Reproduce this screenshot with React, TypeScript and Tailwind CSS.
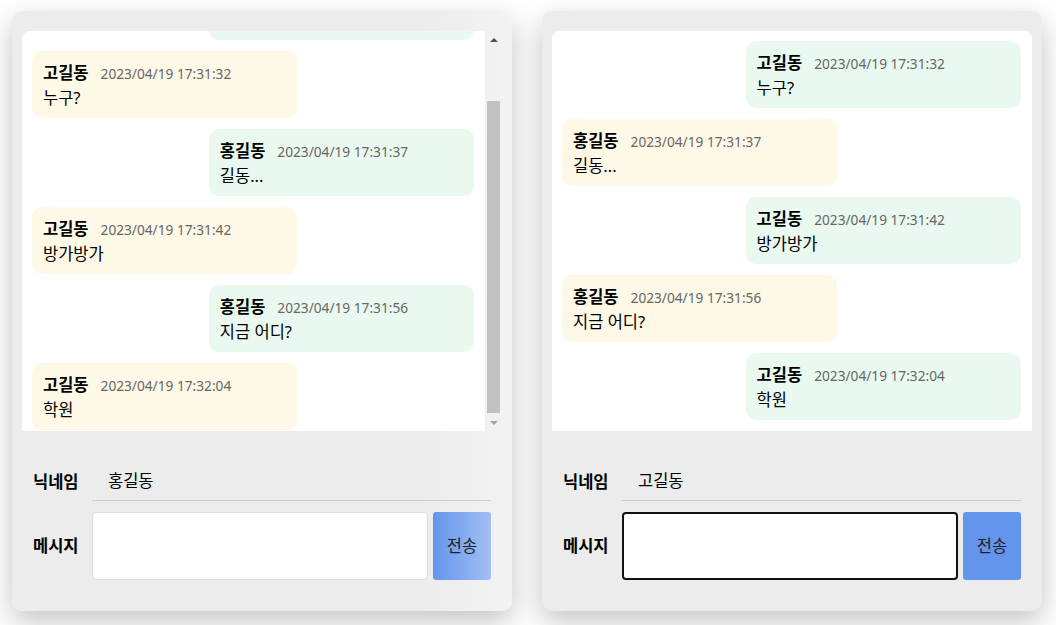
import type { ReactNode } from 'react';

type Msg = { name: string; time: string; text: string };

const ALL: Msg[] = [
  { name: '홍길동', time: '2023/04/19 17:31:28', text: '여보세요' },
  { name: '고길동', time: '2023/04/19 17:31:32', text: '누구?' },
  { name: '홍길동', time: '2023/04/19 17:31:37', text: '길동...' },
  { name: '고길동', time: '2023/04/19 17:31:42', text: '방가방가' },
  { name: '홍길동', time: '2023/04/19 17:31:56', text: '지금 어디?' },
  { name: '고길동', time: '2023/04/19 17:32:04', text: '학원' },
];

const FONT = 'font-["Noto_Sans","Noto_Sans_CJK_KR",sans-serif]';

function Bubble({ msg, mine }: { msg: Msg; mine: boolean }) {
  return (
    <div className={mine ? 'flex shrink-0 justify-end' : 'flex shrink-0 justify-start'}>
      <div
        className={
          'h-[67px] w-[60%] rounded-[10px] pl-[11px] pr-3 pt-[10px] ' +
          (mine ? 'bg-[#e9f9ef]' : 'bg-[#fef8e6]')
        }
      >
        <div className="flex items-baseline gap-[12px] leading-[24px]">
          <span className="text-[16.5px] font-bold text-black">{msg.name}</span>
          <span className="text-[13.7px] text-[#666]">{msg.time}</span>
        </div>
        <div className="text-[16.5px] leading-[24px] text-black">{msg.text}</div>
      </div>
    </div>
  );
}

function Scrollbar() {
  return (
    <div className="flex w-[17px] shrink-0 flex-col bg-[#f1f1f1]">
      <div className="flex h-[17px] items-center justify-center">
        <div className="h-0 w-0 border-x-[4px] border-b-[4px] border-x-transparent border-b-[#505050]" />
      </div>
      <div className="flex-1 pt-[53px] pb-[1px]">
        <div className="mx-[2px] h-full bg-[#c1c1c1]" />
      </div>
      <div className="flex h-[17px] items-center justify-center">
        <div className="h-0 w-0 border-x-[4px] border-t-[4px] border-x-transparent border-t-[#a3a3a3]" />
      </div>
    </div>
  );
}

function Card({
  me,
  messages,
  scrolled,
  focused,
  glow,
}: {
  me: string;
  messages: Msg[];
  scrolled: boolean;
  focused: boolean;
  glow: boolean;
}) {
  let chat: ReactNode;
  if (scrolled) {
    chat = (
      <div className="flex h-[400px] overflow-hidden rounded-tl-lg bg-white">
        <div className="flex flex-1 flex-col justify-end gap-[11px] overflow-hidden pb-[1px] pl-[10px] pr-[11px]">
          {messages.map((m, i) => (
            <Bubble key={i} msg={m} mine={m.name === me} />
          ))}
        </div>
        <Scrollbar />
      </div>
    );
  } else {
    chat = (
      <div className="flex h-[400px] flex-col gap-[11px] overflow-hidden rounded-t-lg bg-white pl-[10px] pr-[11px] pt-[10px]">
        {messages.map((m, i) => (
          <Bubble key={i} msg={m} mine={m.name === me} />
        ))}
      </div>
    );
  }

  return (
    <div
      className={
        'h-[600px] w-[500px] shrink-0 rounded-[10px] px-[10px] pt-[20px] shadow-[0_10px_28px_rgba(0,0,0,0.24)] ' +
        (glow ? 'bg-[linear-gradient(to_right,#ececec_82%,#f3f3f3)]' : 'bg-[#ececec]')
      }
    >
      {chat}
      <div className="mt-[32px] px-[11px]">
        <div className="flex items-center">
          <div className="w-[59px] text-[16.5px] font-bold text-black">닉네임</div>
          <div className="flex h-[38px] flex-1 items-center border-b border-[#cccccc] pl-4 text-[16.5px] text-black">
            {me}
          </div>
        </div>
        <div className="mt-[11px] flex items-center">
          <div className="w-[59px] text-[16.5px] font-bold text-black">메시지</div>
          <div className="flex flex-1 gap-[5px]">
            <textarea
              readOnly
              className={
                'h-[68px] flex-1 resize-none rounded-[4px] bg-white outline-none ' +
                (focused ? 'border-2 border-[#111]' : 'border border-[#dddddd]')
              }
            />
            <button
              type="button"
              className={
                'h-[68px] w-[58px] rounded-[3px] text-[16.5px] text-[#222] ' +
                (glow ? 'bg-[linear-gradient(to_right,#6495ed,#a2bff3)]' : 'bg-[#6495ed]')
              }
            >
              전송
            </button>
          </div>
        </div>
      </div>
    </div>
  );
}

export default function App() {
  return (
    <div className={'flex h-[625px] w-[1056px] gap-[30px] overflow-hidden bg-white pl-[12px] pt-[11px] ' + FONT}>
      <Card me="홍길동" messages={ALL} scrolled focused={false} glow />
      <Card me="고길동" messages={ALL.slice(1)} scrolled={false} focused glow={false} />
    </div>
  );
}
